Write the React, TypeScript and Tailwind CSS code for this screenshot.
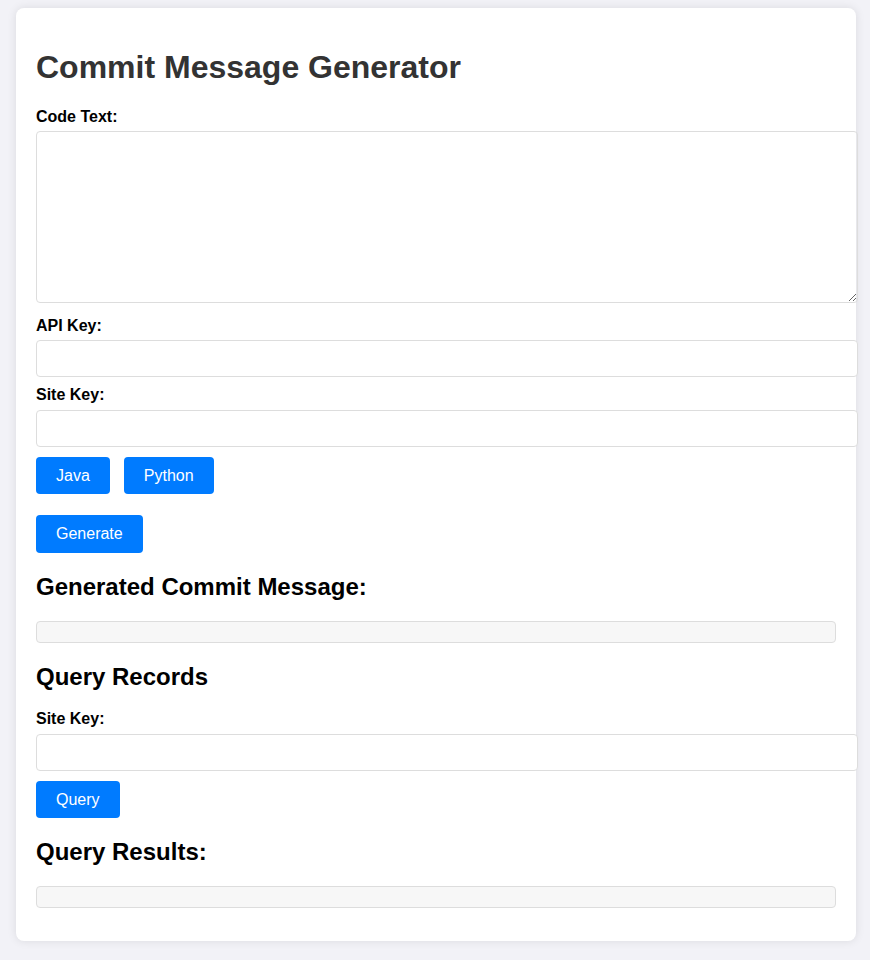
import React from "react";

const labelCls = "block text-[16px] font-bold text-black leading-[18.4px] mb-[5px]";
const inputCls =
  "block w-[822px] h-[37px] box-border border border-[#dddddd] rounded-[4px] px-[10px] text-[13.33px] bg-white outline-none";
const btnCls =
  "bg-[#007bff] text-white text-[16px] leading-[17.6px] px-[20px] py-[10px] rounded-[4px] border-0";
const h2Cls = "text-[24px] font-bold text-black leading-[27.6px] mb-[19.92px]";
const preCls =
  "block w-full h-[22px] box-border bg-[#f7f7f7] border border-[#dddddd] rounded-[4px] my-[13px]";

export default function App() {
  return (
    <div
      className="min-h-screen bg-[#f2f2f7] pt-[8px] pl-[16px] pb-[19px]"
      style={{ fontFamily: '"Liberation Sans", Arial, sans-serif' }}
    >
      <div className="w-[840px] bg-white rounded-[8px] shadow-[0_0_10px_rgba(0,0,0,0.1)] p-[20px] flow-root">
        <h1 className="text-[32px] font-bold text-[#333333] leading-[36.8px] my-[21.44px]">
          Commit Message Generator
        </h1>

        <label className={labelCls}>Code Text:</label>
        <textarea className="block w-[822px] h-[172px] box-border border border-[#dddddd] rounded-[4px] p-[10px] text-[13.33px] mb-[14px] outline-none" />

        <label className={labelCls}>API Key:</label>
        <input className={inputCls + " mb-[9px]"} />

        <label className={labelCls}>Site Key:</label>
        <input className={inputCls + " mb-[10px]"} />

        <div className="flex gap-[14px]">
          <button className={btnCls}>Java</button>
          <button className={btnCls}>Python</button>
        </div>
        <div className="mt-[20.5px]">
          <button className={btnCls}>Generate</button>
        </div>

        <h2 className={h2Cls + " mt-[20.92px]"}>Generated Commit Message:</h2>
        <pre className={preCls}></pre>

        <h2 className={h2Cls + " mt-[19.92px]"}>Query Records</h2>
        <label className={labelCls}>Site Key:</label>
        <input className={inputCls + " mb-[10px]"} />
        <div>
          <button className={btnCls}>Query</button>
        </div>

        <h2 className={h2Cls + " mt-[19.92px]"}>Query Results:</h2>
        <pre className={preCls}></pre>
      </div>
    </div>
  );
}
